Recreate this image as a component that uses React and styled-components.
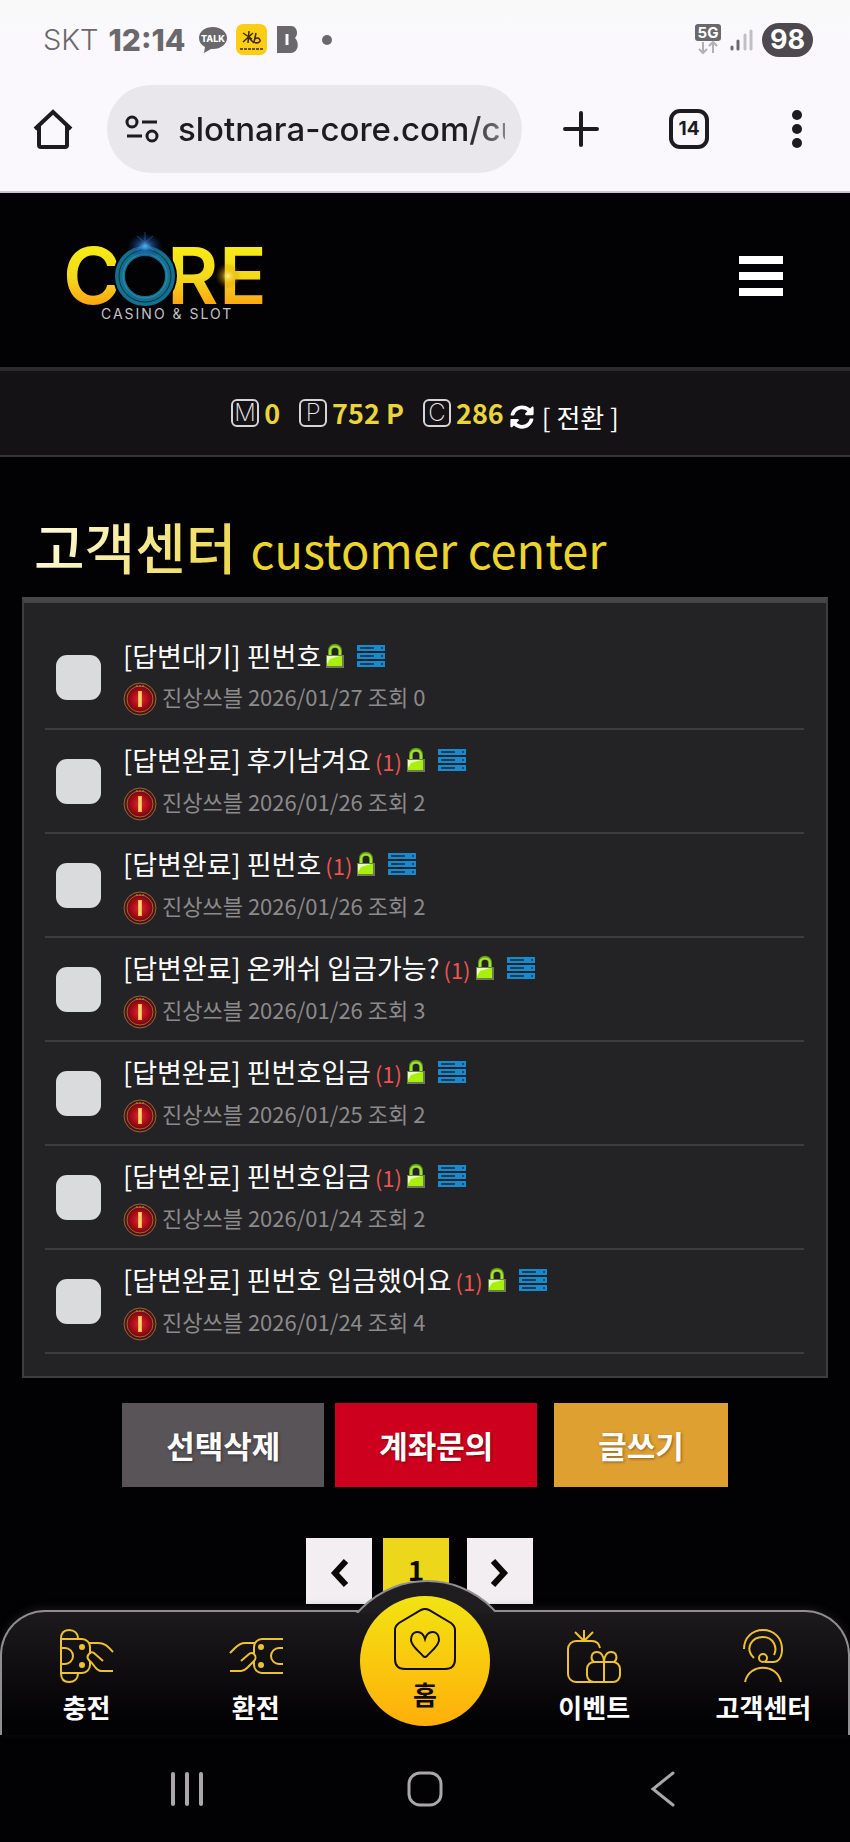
import React from 'react'
import { styled, createGlobalStyle, ThemeProvider } from 'styled-components'
import { FaSyncAlt } from 'react-icons/fa'

const theme = {
  colors: {
    black: '#020103',
    bar: '#141215',
    panel: '#232224',
    line: '#3d3c3f',
    yellow: '#e8d53c',
    gold: '#eec131',
    grey: '#8b8a8c',
    ink: '#1c1b1f',
    status: '#6b686c',
  },
  ui: 'Inter, Roboto, sans-serif',
}

const GlobalStyle = createGlobalStyle`
  * {
    box-sizing: border-box;
    margin: 0;
    padding: 0;
  }
  body {
    background-color: ${theme.colors.black};
    color: #fff;
    font-family: "Noto Sans CJK KR", "Noto Sans", sans-serif;
  }
  button, input {
    font-family: inherit;
    border: none;
    background: none;
  }
  a {
    color: inherit;
    text-decoration: none;
  }
  ul {
    list-style: none;
  }
  svg {
    display: block;
    flex-shrink: 0;
  }
`

const Page = styled.div`
  display: flex;
  flex-direction: column;
  min-height: 100vh;
`

/* ---------- phone status bar + browser bar ---------- */

const Chrome = styled.div`
  background: linear-gradient(#f9f9f9, #faf7fd 70px);
  border-bottom: 2px solid #c9c8cc;
  font-family: ${({ theme }) => theme.ui};
  color: ${({ theme }) => theme.colors.ink};
`

const StatusBar = styled.div`
  display: flex;
  align-items: center;
  height: 80px;
  padding: 0 37px 0 43px;
  color: ${({ theme }) => theme.colors.status};
  font-size: 29px;
  line-height: 36px;

  .carrier {
    font-weight: 300;
  }
  .time {
    margin: 0 13px 0 10px;
    font-size: 30px;
    font-weight: 800;
  }
  .apps {
    display: flex;
    align-items: center;
    gap: 8px;
  }
  .right {
    display: flex;
    align-items: center;
    gap: 8px;
    margin-left: auto;
  }
`

const Battery = styled.span`
  padding: 0 8px;
  border-radius: 17px;
  background-color: #4d494e;
  color: #fff;
  font-size: 27px;
  font-weight: 700;
  line-height: 34px;
`

const BrowserBar = styled.div`
  display: flex;
  align-items: center;
  padding: 5px 33px 18px 33px;
`

const Address = styled.label`
  display: flex;
  align-items: center;
  flex: 1;
  min-width: 0;
  height: 88px;
  margin: 0 39px 0 34px;
  padding: 0 17px 0 18px;
  border-radius: 44px;
  background-color: #eae7ec;

  input {
    flex: 1;
    min-width: 0;
    margin-left: 18px;
    outline: none;
    color: ${({ theme }) => theme.colors.ink};
    font-family: ${({ theme }) => theme.ui};
    font-size: 33px;
    font-weight: 500;
    line-height: 44px;
    mask-image: linear-gradient(90deg, #000 88%, rgba(0, 0, 0, 0.5));
  }
`

const IconButton = styled.button`
  display: flex;
  align-items: center;
  justify-content: center;
  width: 40px;
  height: 40px;
  color: inherit;
  cursor: pointer;
`

const BrowserActions = styled.div`
  display: flex;
  align-items: center;
  gap: 68px;
`

const TabCount = styled.button`
  width: 40px;
  height: 40px;
  border: 4px solid currentColor;
  border-radius: 11px;
  color: inherit;
  font-family: inherit;
  font-size: 19px;
  font-weight: 700;
  line-height: 32px;
`

/* ---------- site header ---------- */

const Header = styled.header`
  display: flex;
  align-items: center;
  justify-content: space-between;
  height: 174px;
  padding: 0 67px 8px 61px;
`

const Hamburger = styled.button`
  display: flex;
  flex-direction: column;
  gap: 8px;
  width: 44px;
  cursor: pointer;

  span {
    height: 8px;
    background-color: #fff;
  }
`

const Wallet = styled.div`
  display: flex;
  align-items: center;
  justify-content: center;
  height: 90px;
  border-top: 4px solid #2b2a2d;
  border-bottom: 2px solid #343336;
  background-color: ${({ theme }) => theme.colors.bar};
`

const Balance = styled.div`
  display: flex;
  align-items: center;
  gap: 5px;
  margin-right: ${({ $last }) => ($last ? 6 : 19)}px;
  color: ${({ theme }) => theme.colors.yellow};
  font-size: 27px;
  font-weight: 700;
  line-height: 36px;

  span {
    width: 28px;
    height: 28px;
    border: 2px solid #d5d4d6;
    border-radius: 6px;
    color: #e8e7e9;
    font-family: ${({ theme }) => theme.ui};
    font-size: 24px;
    font-weight: 200;
    line-height: 24px;
    text-align: center;
  }
`

const Convert = styled.button`
  display: flex;
  align-items: center;
  gap: 8px;
  padding-top: 8px;
  color: #fff;
  font-size: 26px;
  line-height: 36px;
  cursor: pointer;
`

/* ---------- board ---------- */

const Main = styled.main`
  flex: 1;
  padding: 53px 22px 6px;
`

const Title = styled.h1`
  display: flex;
  align-items: baseline;
  gap: 14px;
  height: 87px;
  padding-left: 12px;
  font-size: 55px;
  font-weight: 500;
  line-height: 70px;

  span {
    background: linear-gradient(120deg, #fffbe0 5%, #f1df6c 75%, #e9d545);
    background-clip: text;
    color: transparent;
  }
  small {
    color: #ebd42c;
    font-size: 47px;
    font-weight: 400;
    line-height: 60px;
  }
`

const Board = styled.ul`
  padding: 23px 22px 22px 21px;
  border: 2px solid ${({ theme }) => theme.colors.line};
  border-top: 6px solid #464547;
  background-color: ${({ theme }) => theme.colors.panel};
`

const Row = styled.li`
  display: flex;
  align-items: center;
  gap: 22px;
  min-height: 104px;
  padding: 0 11px;
  border-bottom: 2px solid ${({ theme }) => theme.colors.line};
`

const Check = styled.input.attrs({ type: 'checkbox' })`
  appearance: none;
  width: 45px;
  height: 45px;
  border-radius: 11px;
  background-color: #d9dbdc;
  cursor: pointer;

  &:checked {
    background-color: ${({ theme }) => theme.colors.yellow};
  }
`

const Subject = styled.a`
  display: flex;
  align-items: center;
  font-size: 27px;
  line-height: 36px;

  em {
    margin-left: 4px;
    padding-top: 2px;
    color: #ee5350;
    font-size: 22px;
    font-style: normal;
  }
  .lock {
    margin: 0 12px 0 4px;
  }
`

const Meta = styled.p`
  display: flex;
  gap: 5px;
  margin-top: 8px;
  color: ${({ theme }) => theme.colors.grey};
  font-size: 22px;
  line-height: 28px;
`

const Actions = styled.div`
  display: flex;
  justify-content: center;
  margin-top: 25px;
`

const Btn = styled.button`
  height: 84px;
  padding: 0 44px;
  background-color: ${({ $color }) => $color};
  color: #fff;
  font-size: 31px;
  font-weight: 700;
  line-height: 44px;
  text-shadow: 1px 1px 3px rgba(0, 0, 0, 0.4);
  cursor: pointer;

  & + & {
    margin-left: 11px;
  }
  &:last-child {
    margin-left: 17px;
  }
`

const Pagination = styled.nav`
  display: flex;
  justify-content: center;
  gap: 11px;
  margin-top: 51px;
  padding-right: 11px;

  a:last-child {
    margin-left: 7px;
  }
`

const PageLink = styled.a`
  display: flex;
  align-items: center;
  justify-content: center;
  width: 66px;
  height: 66px;
  padding-top: 4px;
  background-color: ${({ $active }) => ($active ? '#ecd71b' : '#f2eef2')};
  color: #0a0908;
  font-size: 28px;
  font-weight: 700;
  line-height: 40px;

  span {
    padding-bottom: 8px;
  }
`

/* ---------- bottom menu ---------- */

const TabBar = styled.nav`
  position: relative;
  display: grid;
  grid-template-columns: repeat(5, 1fr);
  height: 125px;
  border: 2px solid #8f8e90;
  border-bottom: none;
  border-radius: 45px 45px 0 0;
  background: linear-gradient(#1d1a1e, #020103 90%);
  box-shadow: 0 -2px 8px rgba(60, 58, 62, 0.4);
`

/* top slice of a big circle that rises over the bar */
const Bump = styled.div`
  position: absolute;
  top: -32px;
  left: 50%;
  width: 140px;
  height: 33px;
  margin-left: -70px;
  overflow: hidden;

  &::before {
    content: '';
    display: block;
    width: 182px;
    height: 182px;
    margin-left: -21px;
    border: 2px solid #8f8e90;
    border-radius: 50%;
    background-color: #1f1d20;
  }
`

const Tab = styled.a`
  display: flex;
  flex-direction: column;
  align-items: center;
  gap: 6px;
  padding-top: 17px;
  color: #fff;
  font-size: 26px;
  font-weight: 700;
  line-height: 36px;

  svg {
    color: ${({ theme }) => theme.colors.gold};
  }
`

const HomeTab = styled.a`
  position: absolute;
  top: -16px;
  left: 50%;
  display: flex;
  flex-direction: column;
  align-items: center;
  gap: 6px;
  width: 130px;
  height: 130px;
  margin-left: -65px;
  padding-top: 12px;
  border-radius: 50%;
  background: linear-gradient(#f2e412, #fbc10c 65%, #ffae0c);
  color: #100c08;
  font-size: 26px;
  font-weight: 700;
  line-height: 36px;
`

const SystemNav = styled.div`
  display: grid;
  grid-template-columns: repeat(3, 1fr);
  align-items: center;
  justify-items: center;
  height: 107px;
  padding: 0 8%;
  color: #a9a7aa;
`

/* ---------- drawings ---------- */

const TalkIcon = () => (
  <svg width="30" height="28" viewBox="0 0 30 28">
    <path d="M15 1C7 1 1 5.500 1 12c0 4 2 7 6 9l-1 6 7-4h2c8 0 14-5 14-11S23 1 15 1Z" fill="#6b686c" />
    <text x="15" y="16" fill="#fff" fontSize="9" fontWeight="800" textAnchor="middle">TALK</text>
  </svg>
)

const BankIcon = () => (
  <svg width="32" height="32" viewBox="0 0 32 32">
    <rect width="31" height="31" rx="7" fill="#fbcd14" />
    <g fill="none" stroke="#3d2c10" strokeWidth="1.500">
      <path d="M7 9l9 6M13 7l-1 12M7 18l10-9M12 13l6 6" />
      <path d="M20 9l-2 9c3 2 7 0 6-2s-3-3-5-1" />
      <path d="M4 25h24" strokeDasharray="3 1" />
    </g>
  </svg>
)

const BlockIcon = () => (
  <svg width="24" height="30" viewBox="0 0 24 30">
    <path d="M1 1h14c6 0 8 8 4 12 5 5 3 15-4 15H1Z" fill="#6b686c" />
    <path d="M11 9v11" stroke="#faf8fc" strokeWidth="3" />
  </svg>
)

const NetworkIcon = () => (
  <svg width="28" height="32" viewBox="0 0 28 32">
    <rect x="1" width="26" height="17" rx="3" fill="#6b686c" />
    <text x="14" y="14" fill="#fff" fontSize="15" fontWeight="700" textAnchor="middle">5G</text>
    <path d="M9 18v10M5 25l4 4 4-4M19 29V19M15 22l4-4 4 4" fill="none" stroke="#b3b0b5" strokeWidth="2" />
  </svg>
)

const SignalIcon = () => (
  <svg width="24" height="24" viewBox="0 0 24 24" strokeWidth="3" strokeLinecap="round">
    <path d="M2 19v2M8 13v8" stroke="#6b686c" />
    <path d="M15 7v14M21 3v18" stroke="#c2bfc4" />
  </svg>
)

const HomeIcon = () => (
  <svg width="40" height="42" viewBox="0 0 40 42" fill="none" stroke="currentColor" strokeWidth="4">
    <path d="M2 21L20 4l18 17" />
    <path d="M6 18v19q0 2 2 2h24q2 0 2-2V18" />
  </svg>
)

const TuneIcon = () => (
  <svg width="35" height="30" viewBox="0 0 35 30" fill="none" stroke="currentColor" strokeWidth="3">
    <circle cx="7" cy="8" r="5" />
    <path d="M17 8h15M2 22h15" />
    <circle cx="27" cy="22" r="5" />
  </svg>
)

const Logo = () => (
  <svg width="216" height="100" viewBox="0 0 216 100" role="img" aria-label="CORE CASINO &amp; SLOT">
    <defs>
      <linearGradient id="gold" x1="0" y1="20" x2="0" y2="82" gradientUnits="userSpaceOnUse">
        <stop offset="0" stopColor="#f7ec16" />
        <stop offset="0.5" stopColor="#f3d91c" />
        <stop offset="1" stopColor="#fda010" />
      </linearGradient>
      <radialGradient id="blueGlow">
        <stop offset="0" stopColor="#58bdf5" />
        <stop offset="0.4" stopColor="#2364b4" stopOpacity="0.6" />
        <stop offset="1" stopColor="#103070" stopOpacity="0" />
      </radialGradient>
      <radialGradient id="goldGlow">
        <stop offset="0" stopColor="#fff59a" />
        <stop offset="0.4" stopColor="#f1bd20" stopOpacity="0.5" />
        <stop offset="1" stopColor="#a06000" stopOpacity="0" />
      </radialGradient>
    </defs>
    <g fill="url(#gold)" fontFamily="Inter, sans-serif" fontSize="79" fontWeight="600">
      <text x="2" y="78">C</text>
      <text x="106" y="78">R</text>
      <text x="158" y="78">E</text>
    </g>
    <circle cx="84" cy="50" r="32" fill="#020103" />
    <circle cx="84" cy="50" r="25" fill="none" stroke="#14708f" strokeWidth="10" />
    <circle cx="84" cy="50" r="26" fill="none" stroke="#07303f" strokeWidth="1" />
    <circle cx="84" cy="50" r="22" fill="none" stroke="#2f90ad" strokeWidth="1" />
    <ellipse cx="84" cy="20" rx="18" ry="13" fill="url(#blueGlow)" />
    <path d="M84 6v18M76 10l16 14M92 10L76 24" stroke="#4b93e0" strokeWidth="1" opacity="0.4" />
    <circle cx="167" cy="50" r="13" fill="url(#goldGlow)" />
    <text x="40" y="93" fill="#c4c3c6" fontFamily="Inter, sans-serif" fontSize="14" letterSpacing="2">CASINO &amp; SLOT</text>
  </svg>
)

const LockIcon = () => (
  <svg className="lock" width="20" height="26" viewBox="0 0 20 26">
    <path d="M5 13V8c0-7 10-7 10 0v5" fill="none" stroke="#64991c" strokeWidth="4" />
    <path d="M5 12V8c0-6 10-6 10 0v4" fill="none" stroke="#a4e52b" strokeWidth="2" />
    <rect x="1" y="12" width="18" height="13" fill="#6f7d55" />
    <rect x="2" y="13" width="15" height="10" fill="#a8f10c" />
    <path d="M2 21V13h13L5 16Z" fill="#eaffc0" />
  </svg>
)

const ServerIcon = () => (
  <svg width="28" height="24" viewBox="0 0 28 24">
    {[0, 8, 16].map((y) => (
      <g key={y}>
        <rect x="0" y={y + 1} width="28" height="6" fill="#168bd0" />
        <path d={`M3 ${y + 4}h14`} stroke="#173c58" strokeWidth="2" />
        <path d={`M24 ${y + 4}h2`} stroke="#0b4a78" strokeWidth="2" />
      </g>
    ))}
  </svg>
)

const LevelIcon = () => (
  <svg width="34" height="34" viewBox="0 0 34 34">
    <defs>
      <radialGradient id="ruby">
        <stop offset="0" stopColor="#e8262a" />
        <stop offset="0.7" stopColor="#a00a18" />
        <stop offset="1" stopColor="#6a0a12" />
      </radialGradient>
    </defs>
    <circle cx="17" cy="17" r="16" fill="#4e1413" stroke="#8e6a3d" strokeWidth="1" />
    <circle cx="17" cy="17" r="13" fill="url(#ruby)" stroke="#a5672f" strokeWidth="1" />
    <path d="M15 9h4v16h-4Z" fill="#f1b34c" />
    <path d="M17 10v14" stroke="#fff0a0" strokeWidth="1" />
    <path d="M13 4h8" stroke="#b58845" strokeWidth="1" strokeDasharray="2 1" />
  </svg>
)

const Chevron = ({ d }) => (
  <svg width="20" height="30" viewBox="0 0 20 30" fill="none" stroke="currentColor" strokeWidth="6">
    <path d={d} />
  </svg>
)

const TabIcon = ({ children }) => (
  <svg width="54" height="54" viewBox="0 0 54 54" fill="none" stroke="currentColor" strokeWidth="2">
    {children}
  </svg>
)

const DepositIcon = () => (
  <TabIcon>
    <path d="M1 10C1 4 4 1 9 1s9 3 9 9M1 44c0 6 3 9 8 9s9-3 9-9M1 9v36" />
    <path d="M1 10h21a8 8 0 0 1 8 8v7M30 32v4a8 8 0 0 1-8 8H1M1 19h4a8 8 0 0 1 0 16H1" />
    <path d="M29 14h9c8 0 11 5 15 9M43 32l-9-8q-3-2-5 1c-3 3-1 6 2 8l4 5q3 4 6 4h12" />
    <circle cx="22" cy="18" r="2" fill="currentColor" />
    <circle cx="22" cy="36" r="2" fill="currentColor" />
  </TabIcon>
)

const WithdrawIcon = () => (
  <TabIcon>
    <path d="M1 24l5-5q5-5 10-5h10" />
    <path d="M54 10H33a8 8 0 0 0-8 8v7M25 32v4a8 8 0 0 0 8 8h21M54 19h-4a8 8 0 0 0 0 16h4" />
    <path d="M12 32l8-7q3-2 5 0c2 2 2 5 0 7l-7 7q-3 3-6 3H1" />
    <circle cx="32" cy="18" r="2" fill="currentColor" />
    <circle cx="32" cy="36" r="2" fill="currentColor" />
  </TabIcon>
)

const EventIcon = () => (
  <TabIcon>
    <path d="M17 12V1M17 12L8 3M17 12l9-9" />
    <path d="M33 19c-1-5-4-7-8-7H9a8 8 0 0 0-8 8v25a8 8 0 0 0 8 8h20" />
    <rect x="20" y="33" width="33" height="20" rx="7" />
    <path d="M37 33v20M37 33c0-6-3-10-7-10-6 0-7 7-3 10M37 33c0-6 3-10 7-10 6 0 7 7 3 10" />
  </TabIcon>
)

const SupportIcon = () => (
  <TabIcon>
    <path d="M8 20C8 9 16 1 27 1s19 8 19 19c0 9-4 13-9 13h-8" />
    <path d="M18 29c-10-10-2-21 9-21 10 0 15 10 11 18" />
    <circle cx="27" cy="29" r="4" />
    <path d="M9 53c4-19 32-19 36 0" />
  </TabIcon>
)

const HeartHouse = () => (
  <svg width="62" height="62" viewBox="0 0 62 62" fill="none" stroke="currentColor" strokeWidth="2">
    <path d="M27 2q4-2 8 0l22 13q4 3 4 7v29q0 10-10 10H11Q1 61 1 51V22q0-4 4-7Z" />
    <path d="M31 31c-3-10-14-9-14 1 0 6 8 11 12 16q2 2 4 0c4-5 12-10 12-16 0-10-11-11-14-1Z" />
  </svg>
)

/* ---------- data ---------- */

const balances = [
  { mark: 'M', value: '0' },
  { mark: 'P', value: '752 P' },
  { mark: 'C', value: '286' },
]

const posts = [
  { id: 1, state: '답변대기', subject: '핀번호', date: '2026/01/27', hit: 0 },
  { id: 2, state: '답변완료', subject: '후기남겨요', reply: 1, date: '2026/01/26', hit: 2 },
  { id: 3, state: '답변완료', subject: '핀번호', reply: 1, date: '2026/01/26', hit: 2 },
  { id: 4, state: '답변완료', subject: '온캐쉬 입금가능?', reply: 1, date: '2026/01/26', hit: 3 },
  { id: 5, state: '답변완료', subject: '핀번호입금', reply: 1, date: '2026/01/25', hit: 2 },
  { id: 6, state: '답변완료', subject: '핀번호입금', reply: 1, date: '2026/01/24', hit: 2 },
  { id: 7, state: '답변완료', subject: '핀번호 입금했어요', reply: 1, date: '2026/01/24', hit: 4 },
]

const App = () => {
  return (
    <ThemeProvider theme={theme}>
      <GlobalStyle />
      <Page>
        <Chrome>
          <StatusBar>
            <span className="carrier">SKT</span>
            <span className="time">12:14</span>
            <div className="apps">
              <TalkIcon />
              <BankIcon />
              <BlockIcon />
              <svg width="48" height="10" viewBox="0 0 48 10"><circle cx="19" cy="5" r="5" fill="#6b686c" /></svg>
            </div>
            <div className="right">
              <NetworkIcon />
              <SignalIcon />
              <Battery>98</Battery>
            </div>
          </StatusBar>
          <BrowserBar>
            <IconButton aria-label="home"><HomeIcon /></IconButton>
            <Address>
              <TuneIcon />
              <input type="text" aria-label="address" defaultValue="slotnara-core.com/customer" />
            </Address>
            <BrowserActions>
              <IconButton aria-label="new tab">
                <svg width="36" height="36" viewBox="0 0 36 36" stroke="currentColor" strokeWidth="4" strokeLinecap="round">
                  <path d="M18 2v32M2 18h32" />
                </svg>
              </IconButton>
              <TabCount>14</TabCount>
              <IconButton aria-label="menu">
                <svg width="10" height="38" viewBox="0 0 10 38" fill="currentColor">
                  <circle cx="5" cy="5" r="5" />
                  <circle cx="5" cy="19" r="5" />
                  <circle cx="5" cy="33" r="5" />
                </svg>
              </IconButton>
            </BrowserActions>
          </BrowserBar>
        </Chrome>

        <Header>
          <a href="#home"><Logo /></a>
          <Hamburger aria-label="menu"><span /><span /><span /></Hamburger>
        </Header>

        <Wallet>
          {balances.map((b) => (
            <Balance key={b.mark} $last={b.mark === 'C'}>
              <span>{b.mark}</span>
              {b.value}
            </Balance>
          ))}
          <Convert><FaSyncAlt size={24} /> [ 전환 ]</Convert>
        </Wallet>

        <Main>
          <Title><span>고객센터</span> <small>customer center</small></Title>

          <Board>
            {posts.map((post) => (
              <Row key={post.id}>
                <Check aria-label={post.subject} />
                <div>
                  <Subject href={`#post-${post.id}`}>
                    [{post.state}] {post.subject}
                    {post.reply && <em>({post.reply})</em>}
                    <LockIcon />
                    <ServerIcon />
                  </Subject>
                  <Meta>
                    <LevelIcon />
                    진상쓰블 {post.date} 조회 {post.hit}
                  </Meta>
                </div>
              </Row>
            ))}
          </Board>

          <Actions>
            <Btn $color="#585458">선택삭제</Btn>
            <Btn $color="#cd001d">계좌문의</Btn>
            <Btn $color="#dfa032">글쓰기</Btn>
          </Actions>

          <Pagination>
            <PageLink href="#prev" aria-label="prev"><Chevron d="M17 3L6 15l11 12" /></PageLink>
            <PageLink href="#1" $active><span>1</span></PageLink>
            <PageLink href="#next" aria-label="next"><Chevron d="M3 3l11 12L3 27" /></PageLink>
          </Pagination>
        </Main>

        <TabBar>
          <Tab href="#deposit"><DepositIcon />충전</Tab>
          <Tab href="#withdraw"><WithdrawIcon />환전</Tab>
          <div>
            <Bump />
            <HomeTab href="#home"><HeartHouse />홈</HomeTab>
          </div>
          <Tab href="#event"><EventIcon />이벤트</Tab>
          <Tab href="#customer"><SupportIcon />고객센터</Tab>
        </TabBar>

        <SystemNav>
          <IconButton aria-label="recent">
            <svg width="36" height="36" viewBox="0 0 36 36" stroke="currentColor" strokeWidth="4" strokeLinecap="round">
              <path d="M4 3v30M18 3v30M32 3v30" />
            </svg>
          </IconButton>
          <IconButton aria-label="home">
            <svg width="36" height="36" viewBox="0 0 36 36" fill="none" stroke="currentColor" strokeWidth="3">
              <rect x="2" y="2" width="32" height="32" rx="11" />
            </svg>
          </IconButton>
          <IconButton aria-label="back">
            <svg width="26" height="36" viewBox="0 0 26 36" fill="none" stroke="currentColor" strokeWidth="3" strokeLinecap="round">
              <path d="M23 2L3 18l20 16" />
            </svg>
          </IconButton>
        </SystemNav>
      </Page>
    </ThemeProvider>
  )
}

export default App
